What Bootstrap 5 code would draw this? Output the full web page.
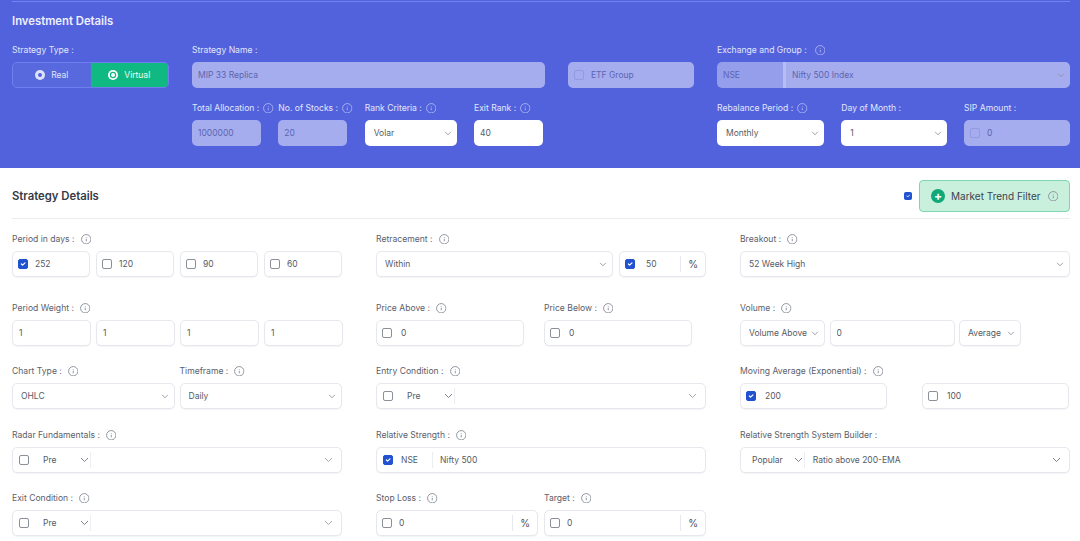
<!DOCTYPE html>
<html lang="en">
<head>
<meta charset="utf-8">
<title>Investment Details</title>
<link href="https://cdn.jsdelivr.net/npm/bootstrap@5.3.0/dist/css/bootstrap.min.css" rel="stylesheet">
<style>
html,body{height:541px;overflow:hidden}
body{font-family:Inter,"Noto Sans","Liberation Sans",sans-serif;font-size:8.5px;color:#555b66;background:#fff}
.band{background:#5262dc;height:168px;padding:1px 10px 0 12px}
.band-rule{height:1px;background:#7183f0}
.band h2{font-size:11.3px;font-weight:600;color:#eef0ff;line-height:14px;margin:12px 0 16px}
.top-row{display:grid;grid-template-columns:157px 353px 126px 353px;column-gap:23px}
.top-row+.top-row{margin-top:14px}
.lbl{display:flex;align-items:center;gap:6px;height:12px;line-height:12px;margin-bottom:5px;font-size:8.6px;font-weight:400;white-space:nowrap;color:#5b606b}
.band .lbl{color:#e3e6fb;margin-bottom:6px;gap:4px}
.lbl svg,.mtf svg.inf{width:10.5px;height:10.5px;flex:none;fill:none;stroke:#8d929c;stroke-width:1}
.band .lbl svg{stroke:#a9b2f2}
.toggle{display:flex;height:26px;border:1px solid #6f7ff0;border-radius:5px;overflow:hidden;background:rgba(255,255,255,.04)}
.tog-item{flex:1;display:flex;align-items:center;justify-content:center;gap:6px;color:#dfe3fb;margin:0;font-size:8.5px;height:100%}
.tog-on{background:#10b981;color:#e6fff5}
.tog-dot{width:10px;height:10px;border-radius:50%;background:#dfe2f7;position:relative;flex:none}
.tog-dot::after{content:"";position:absolute;left:3px;top:3px;width:4px;height:4px;border-radius:50%;background:#5262dc}
.tog-on .tog-dot{background:#fff}
.tog-on .tog-dot::after{background:#fff;box-shadow:0 0 0 1.2px #10b981}
.form-control.ctl,.form-select.ctl{height:26px;min-height:0;padding:0 6px;font-size:8.5px;line-height:24px;color:#555b66;border:1px solid #e6e8ed;border-radius:5px;box-shadow:0 1px 1px rgba(20,30,60,.05);background-color:#fff}
.form-select.ctl{padding:0 14px 0 8px;background-image:url("data:image/svg+xml,%3csvg xmlns='http://www.w3.org/2000/svg' viewBox='0 0 9 6'%3e%3cpath fill='none' stroke='%238a8e96' stroke-width='1' d='M1 1l3.5 3.5L8 1'/%3e%3c/svg%3e");background-position:right 5px center;background-size:8px 5px}
.band .form-control.ctl,.band .form-select.ctl{border:0;box-shadow:none}
.band .form-select.ctl{padding-left:9px}
.band .ctl:disabled,.off{background-color:#a5adef!important;color:#5c65b0!important;opacity:1}
.sub-l{display:grid;grid-template-columns:69px 69px 92px 69px;column-gap:17.33px}
.sub-r{display:grid;grid-template-columns:107px 105.5px 106px;column-gap:17.25px}
.fld{height:26px;display:flex;align-items:center;border:1px solid #e6e8ed;border-radius:5px;box-shadow:0 1px 1px rgba(20,30,60,.05);background:#fff;padding:0 5px;gap:7px;color:#555b66;font-size:8.5px;min-width:0}
.fld.off{border:0;box-shadow:none;gap:7px;padding:0 6px}
.ck.form-check-input{width:10px;height:10px;margin:0;flex:none;border:1px solid #8b8f98;border-radius:2px;background-color:#fff}
.ck.form-check-input:checked{background-color:#2152d0;border-color:#2152d0}
.off .ck.form-check-input{background-color:transparent;border-color:#939be0;opacity:1}
.unit{margin-left:auto;align-self:center;height:16px;display:flex;align-items:center;border-left:1px solid #e6e8ed;padding-left:7px;padding-right:2px;font-size:10px;color:#4a4f5a}
.val-gap{margin-left:2px}
.exch{display:flex;height:26px;border-radius:5px;overflow:hidden}
.exch-a{width:66px;background:#959eea;color:#5c65b0;display:flex;align-items:center;padding-left:6px;flex:none}
.exch-g{width:3px;background:#b8bef3;flex:none}
.exch .form-select.ctl{flex:1;width:auto;border-radius:0;padding-left:6px}
.bar{display:flex;align-items:center;justify-content:space-between;margin:0 10px 0 12px;padding:12px 0 6px;border-bottom:1px solid #eaecef}
.bar h2{font-size:11.3px;font-weight:600;color:#353a45;margin:0;line-height:14px}
.mtf{display:flex;align-items:center;gap:6px;height:32px;width:151px;padding:0 9px 0 11px;background:#c9f0dd;border:1px solid #7fd5b1;border-radius:4px;color:#3c4250;font-size:10px;white-space:nowrap;margin:0}
.mtf-wrap{display:flex;align-items:center;gap:7px}
.mtf-wrap .ck.form-check-input{width:8px;height:8px;border-radius:1.5px}
.plus{width:14px;height:14px;border-radius:50%;background:#10a877;color:#fff;display:flex;align-items:center;justify-content:center;flex:none;font-size:12px;font-weight:700;line-height:1}
.mtf svg.inf{margin-left:1px}
.body-wrap{padding:14px 10px 0 12px}
.srow{display:grid;grid-template-columns:330px 330px 330px;column-gap:34px;margin-bottom:19px}
.srow.first{margin-bottom:25px}
.srow.second{margin-bottom:19px}
.srow.third{margin-bottom:20px}
.first .lbl,.second .lbl,.sp6 .lbl{margin-bottom:6px}
.g4a{display:grid;grid-template-columns:repeat(4,78px);column-gap:6px}
.g4b{display:grid;grid-template-columns:repeat(4,79px);column-gap:5px}
.g2{display:grid;grid-template-columns:1fr 1fr;column-gap:5px}
.g-ret{display:grid;grid-template-columns:237px 87px;column-gap:6px}
.g-price{display:grid;grid-template-columns:148px 148px;column-gap:20px}
.g-stop{display:grid;grid-template-columns:162px 162px;column-gap:6px}
.g-vol{display:grid;grid-template-columns:85px 125px 62px;column-gap:4.5px}
.g-ma{display:grid;grid-template-columns:147px 147px;column-gap:35px}
.fld.cond{padding-left:6px;gap:0}
.fld.cond .ck{margin-right:14px}
.fld.cond.rs .ck{margin-right:8px}
.inner-sel{color:#555b66;font-size:8.5px;flex:none;display:flex;align-items:center;gap:24px}
.inner-sel.b-pop{margin-left:5px;gap:11px}
.chev{width:9px;height:6px;flex:none;fill:none;stroke:#7d828b;stroke-width:1}
.chev.soft{stroke:#a6aab2}
.inner-line{width:1px;height:16px;background:#eceef1;flex:none;margin-left:1px}
.rs .inner-line{margin-left:14px}
.push{margin-left:auto;margin-right:3px}
.rs-text{padding-left:7px}
.cond .b-pop+.inner-line+.rs-text{padding-left:8px}
</style>
</head>
<body>
<svg width="0" height="0" class="position-absolute"><defs>
<symbol id="inf" viewBox="0 0 11 11"><circle cx="5.5" cy="5.5" r="4.9"/><path d="M5.5 5v2.6M5.5 3.2v.7"/></symbol>
<symbol id="chv" viewBox="0 0 9 6"><path d="M1 1l3.5 3.5L8 1"/></symbol>
</defs></svg>

<section class="band">
  <div class="band-rule"></div>
  <h2>Investment Details</h2>
  <div class="top-row">
    <div>
      <div class="lbl">Strategy Type :</div>
      <div class="toggle">
        <label class="tog-item"><span class="tog-dot"></span>Real</label>
        <label class="tog-item tog-on"><span class="tog-dot"></span>Virtual</label>
      </div>
    </div>
    <div>
      <div class="lbl">Strategy Name :</div>
      <input class="form-control ctl" disabled value="MIP 33 Replica">
    </div>
    <div>
      <div class="lbl">&nbsp;</div>
      <div class="fld off"><input class="form-check-input ck" type="checkbox" disabled><span>ETF Group</span></div>
    </div>
    <div>
      <div class="lbl">Exchange and Group : <svg class="ms-1"><use href="#inf"/></svg></div>
      <div class="exch">
        <div class="exch-a">NSE</div><div class="exch-g"></div>
        <select class="form-select ctl" disabled><option>Nifty 500 Index</option></select>
      </div>
    </div>
  </div>
  <div class="top-row">
    <div></div>
    <div class="sub-l" style="grid-column:2/4">
      <div>
        <div class="lbl">Total Allocation : <svg><use href="#inf"/></svg></div>
        <input class="form-control ctl" disabled value="1000000">
      </div>
      <div>
        <div class="lbl">No. of Stocks : <svg><use href="#inf"/></svg></div>
        <input class="form-control ctl" disabled value="20">
      </div>
      <div>
        <div class="lbl">Rank Criteria : <svg><use href="#inf"/></svg></div>
        <select class="form-select ctl"><option>Volar</option></select>
      </div>
      <div>
        <div class="lbl">Exit Rank : <svg><use href="#inf"/></svg></div>
        <input class="form-control ctl" value="40">
      </div>
    </div>
    <div class="sub-r" style="grid-column:4">
      <div>
        <div class="lbl">Rebalance Period : <svg><use href="#inf"/></svg></div>
        <select class="form-select ctl"><option>Monthly</option></select>
      </div>
      <div>
        <div class="lbl">Day of Month :</div>
        <select class="form-select ctl"><option>1</option></select>
      </div>
      <div>
        <div class="lbl">SIP Amount :</div>
        <div class="fld off"><input class="form-check-input ck" type="checkbox" disabled><span>0</span></div>
      </div>
    </div>
  </div>
</section>

<div class="bar">
  <h2>Strategy Details</h2>
  <div class="mtf-wrap">
    <input class="form-check-input ck" type="checkbox" checked>
    <div class="mtf"><span class="plus">+</span>Market Trend Filter <svg class="inf"><use href="#inf"/></svg></div>
  </div>
</div>

<main class="body-wrap">
  <div class="srow first">
    <div>
      <div class="lbl">Period in days : <svg><use href="#inf"/></svg></div>
      <div class="g4a">
        <div class="fld"><input class="form-check-input ck" type="checkbox" checked>252</div>
        <div class="fld"><input class="form-check-input ck" type="checkbox">120</div>
        <div class="fld"><input class="form-check-input ck" type="checkbox">90</div>
        <div class="fld"><input class="form-check-input ck" type="checkbox">60</div>
      </div>
    </div>
    <div>
      <div class="lbl">Retracement : <svg><use href="#inf"/></svg></div>
      <div class="g-ret">
        <select class="form-select ctl"><option>Within</option></select>
        <div class="fld"><input class="form-check-input ck" type="checkbox" checked><span class="ms-1">50</span><span class="unit">%</span></div>
      </div>
    </div>
    <div>
      <div class="lbl">Breakout : <svg><use href="#inf"/></svg></div>
      <select class="form-select ctl"><option>52 Week High</option></select>
    </div>
  </div>

  <div class="srow second">
    <div>
      <div class="lbl">Period Weight : <svg><use href="#inf"/></svg></div>
      <div class="g4b">
        <input class="form-control ctl" value="1"><input class="form-control ctl" value="1"><input class="form-control ctl" value="1"><input class="form-control ctl" value="1">
      </div>
    </div>
    <div>
      <div class="g-price">
        <div>
          <div class="lbl">Price Above : <svg><use href="#inf"/></svg></div>
          <div class="fld"><input class="form-check-input ck" type="checkbox"><span class="val-gap">0</span></div>
        </div>
        <div>
          <div class="lbl">Price Below : <svg><use href="#inf"/></svg></div>
          <div class="fld"><input class="form-check-input ck" type="checkbox"><span class="val-gap">0</span></div>
        </div>
      </div>
    </div>
    <div>
      <div class="lbl">Volume : <svg><use href="#inf"/></svg></div>
      <div class="g-vol">
        <select class="form-select ctl"><option>Volume Above</option></select>
        <input class="form-control ctl" value="0">
        <select class="form-select ctl"><option>Average</option></select>
      </div>
    </div>
  </div>

  <div class="srow sp6 third">
    <div class="g2">
      <div>
        <div class="lbl">Chart Type : <svg><use href="#inf"/></svg></div>
        <select class="form-select ctl"><option>OHLC</option></select>
      </div>
      <div>
        <div class="lbl">Timeframe : <svg><use href="#inf"/></svg></div>
        <select class="form-select ctl"><option>Daily</option></select>
      </div>
    </div>
    <div>
      <div class="lbl">Entry Condition : <svg><use href="#inf"/></svg></div>
      <div class="fld cond"><input class="form-check-input ck" type="checkbox"><span class="inner-sel">Pre <svg class="chev"><use href="#chv"/></svg></span><span class="inner-line"></span><svg class="chev soft push"><use href="#chv"/></svg></div>
    </div>
    <div>
      <div class="lbl">Moving Average (Exponential) : <svg><use href="#inf"/></svg></div>
      <div class="g-ma">
        <div class="fld"><input class="form-check-input ck" type="checkbox" checked><span class="val-gap">200</span></div>
        <div class="fld"><input class="form-check-input ck" type="checkbox"><span class="val-gap">100</span></div>
      </div>
    </div>
  </div>

  <div class="srow sp6">
    <div>
      <div class="lbl">Radar Fundamentals : <svg><use href="#inf"/></svg></div>
      <div class="fld cond"><input class="form-check-input ck" type="checkbox"><span class="inner-sel">Pre <svg class="chev"><use href="#chv"/></svg></span><span class="inner-line"></span><svg class="chev soft push"><use href="#chv"/></svg></div>
    </div>
    <div>
      <div class="lbl">Relative Strength : <svg><use href="#inf"/></svg></div>
      <div class="fld cond rs"><input class="form-check-input ck" type="checkbox" checked><span>NSE</span><span class="inner-line"></span><span class="rs-text">Nifty 500</span></div>
    </div>
    <div>
      <div class="lbl">Relative Strength System Builder :</div>
      <div class="fld cond"><span class="inner-sel b-pop">Popular <svg class="chev"><use href="#chv"/></svg></span><span class="inner-line"></span><span class="rs-text">Ratio above 200-EMA</span><svg class="chev push"><use href="#chv"/></svg></div>
    </div>
  </div>

  <div class="srow sp6">
    <div>
      <div class="lbl">Exit Condition : <svg><use href="#inf"/></svg></div>
      <div class="fld cond"><input class="form-check-input ck" type="checkbox"><span class="inner-sel">Pre <svg class="chev"><use href="#chv"/></svg></span><span class="inner-line"></span><svg class="chev soft push"><use href="#chv"/></svg></div>
    </div>
    <div class="g-stop">
      <div>
        <div class="lbl">Stop Loss : <svg><use href="#inf"/></svg></div>
        <div class="fld"><input class="form-check-input ck" type="checkbox"><span>0</span><span class="unit">%</span></div>
      </div>
      <div>
        <div class="lbl">Target : <svg><use href="#inf"/></svg></div>
        <div class="fld"><input class="form-check-input ck" type="checkbox"><span>0</span><span class="unit">%</span></div>
      </div>
    </div>
    <div></div>
  </div>
</main>
<script src="https://cdn.jsdelivr.net/npm/bootstrap@5.3.0/dist/js/bootstrap.bundle.min.js"></script>
</body>
</html>
